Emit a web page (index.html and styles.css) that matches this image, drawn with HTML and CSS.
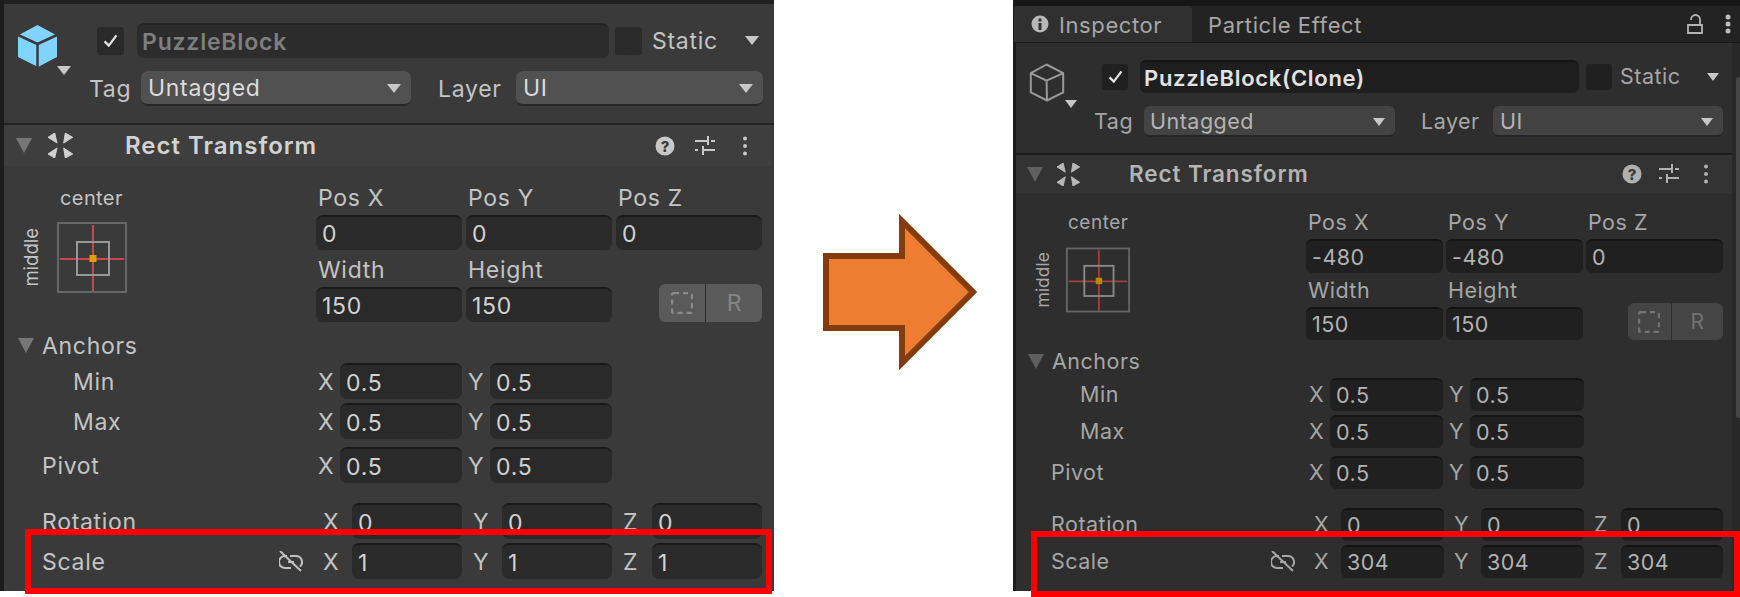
FILE: index.html
```html
<!DOCTYPE html>
<html lang="en">
<head>
<meta charset="utf-8">
<title>Inspector comparison</title>
<link rel="stylesheet" href="styles.css">
</head>
<body>
<main class="stage">

  <section class="panel panel-a">
    <div class="go-head">
      <div class="go-icon">
        <svg class="cube" viewBox="0 0 40 42"><path class="cube-fill" d="M19.5 0 39 10.500V32L20 42 0 32V10.500Z"/><path class="cube-cut" d="M0 10 19.500 19 39 10M19.500 19V42"/></svg>
        <span class="tri tri-icon"></span>
      </div>
      <div class="go-rows">
        <div class="go-row go-row-1">
          <span class="check"><svg viewBox="0 0 20 20"><path d="M3 11l5 5 9-12"/></svg></span>
          <span class="name name-off">PuzzleBlock</span>
          <span class="check"></span>
          <span class="txt static">Static</span>
          <span class="tri"></span>
        </div>
        <div class="go-row go-row-2">
          <span class="txt lbl-tag">Tag</span>
          <span class="drop drop-tag"><span>Untagged</span><span class="tri"></span></span>
          <span class="txt lbl-layer">Layer</span>
          <span class="drop drop-layer"><span>UI</span><span class="tri"></span></span>
        </div>
      </div>
    </div>
    <div class="comp-head">
      <span class="fold"></span>
      <svg class="rt-icon" viewBox="0 0 25 25"><path d="M0 4.300 6.700 0 9 10ZM15.700 10 17.300 0 24.700 4.300ZM0 21 9 15 6.700 25ZM15.700 15 24.700 21 17.300 25Z"/></svg>
      <span class="comp-title">Rect Transform</span>
      <svg class="h-icon help" viewBox="0 0 20 20"><circle cx="10" cy="10" r="9.500"/><text class="help-q" x="10" y="15.500">?</text></svg>
      <svg class="h-icon sliders" viewBox="0 0 20 20"><path d="M0 5h13M16 5h4M13 0v9M0 14h3M8 14h12M8 10v9"/></svg>
      <svg class="h-icon dots" viewBox="0 0 20 20"><circle cx="10" cy="2.500" r="2"/><circle cx="10" cy="10" r="2"/><circle cx="10" cy="17.500" r="2"/></svg>
    </div>
    <div class="body">
      <div class="rect-top">
        <div class="anchor">
          <span class="a-center">center</span>
          <span class="a-middle">middle</span>
          <svg class="a-box" viewBox="0 0 70 71">
            <rect class="ab-outer" x="1" y="1" width="68" height="69"/>
            <path class="ab-red" d="M3 37H67M36 3V69"/>
            <rect class="ab-inner" x="20" y="20" width="32" height="33"/>
            <rect class="ab-dot" x="32.500" y="33" width="7" height="7"/>
          </svg>
        </div>
        <div class="pos">
          <span class="cap">Pos X</span><span class="cap">Pos Y</span><span class="cap">Pos Z</span>
          <span class="field">0</span><span class="field">0</span><span class="field">0</span>
          <span class="cap cap-low">Width</span><span class="cap cap-low">Height</span><span></span>
          <span class="field">150</span><span class="field">150</span>
          <span class="resets">
            <span class="reset-l"><svg viewBox="0 0 22 22"><rect x="1" y="1" width="20" height="20" rx="2"/></svg></span>
            <span class="reset-r">R</span>
          </span>
        </div>
      </div>
      <div class="anchors-head"><span class="fold"></span><span class="txt">Anchors</span></div>
      <div class="vrow two gap-s"><span class="txt sub">Min</span><span class="pair"><span class="axis">X</span><span class="field">0.5</span></span><span class="pair"><span class="axis">Y</span><span class="field">0.5</span></span></div>
      <div class="vrow two gap-a"><span class="txt sub">Max</span><span class="pair"><span class="axis">X</span><span class="field">0.5</span></span><span class="pair"><span class="axis">Y</span><span class="field">0.5</span></span></div>
      <div class="vrow two gap-b"><span class="txt">Pivot</span><span class="pair"><span class="axis">X</span><span class="field">0.5</span></span><span class="pair"><span class="axis">Y</span><span class="field">0.5</span></span></div>
      <div class="vrow three gap-c"><span class="txt">Rotation</span><span class="pair"><span class="axis">X</span><span class="field">0</span></span><span class="pair"><span class="axis">Y</span><span class="field">0</span></span><span class="pair"><span class="axis">Z</span><span class="field">0</span></span></div>
      <div class="vrow three gap-a"><span class="txt scale-lbl">Scale<svg class="unlink" viewBox="0 0 24 22"><path d="M8 5H6a6 6 0 0 0 0 12h6M11 5h6a6 6 0 0 1 4 10.500M9 11h6M1 0 22 20"/></svg></span><span class="pair"><span class="axis">X</span><span class="field">1</span></span><span class="pair"><span class="axis">Y</span><span class="field">1</span></span><span class="pair"><span class="axis">Z</span><span class="field">1</span></span></div>
    </div>
    <div class="redbox"></div>
  </section>

  <div class="arrow-col">
    <svg class="arrow" viewBox="0 0 154 156"><path d="M3 42H79V7L150 78 79 149V114H3Z"/></svg>
  </div>

  <section class="panel panel-b">
    <div class="tabs">
      <span class="tab tab-on">
        <svg class="info" viewBox="0 0 18 18"><circle cx="9" cy="9" r="8.500"/><rect class="info-i" x="7.500" y="3.500" width="3" height="3"/><rect class="info-i" x="7.500" y="8" width="3" height="7"/></svg>
        <span class="tab-text">Inspector</span>
      </span>
      <span class="tab"><span class="tab-text">Particle Effect</span></span>
      <span class="tab-tools">
        <svg class="lock" viewBox="0 0 16 20"><path d="M1 11h14v8H1zM13 11V5.500a4.500 4.500 0 0 0-9 0V6"/></svg>
        <svg class="tdots" viewBox="0 0 8 20"><circle cx="4" cy="3" r="2.500"/><circle cx="4" cy="10" r="2.500"/><circle cx="4" cy="17" r="2.500"/></svg>
      </span>
    </div>
    <div class="go-head">
      <div class="go-icon">
        <svg class="cube" viewBox="0 0 40 42"><path class="cube-line" d="M19.500 1 38 10.500V32L20 41 2 32V10.500ZM2 10.500 19.500 19 38 10.500M19.500 19 20 41"/></svg>
        <span class="tri tri-icon"></span>
      </div>
      <div class="go-rows">
        <div class="go-row go-row-1">
          <span class="check"><svg viewBox="0 0 20 20"><path d="M3 11l5 5 9-12"/></svg></span>
          <span class="name">PuzzleBlock(Clone)</span>
          <span class="check"></span>
          <span class="txt static">Static</span>
          <span class="tri"></span>
        </div>
        <div class="go-row go-row-2">
          <span class="txt lbl-tag">Tag</span>
          <span class="drop drop-tag"><span>Untagged</span><span class="tri"></span></span>
          <span class="txt lbl-layer">Layer</span>
          <span class="drop drop-layer"><span>UI</span><span class="tri"></span></span>
        </div>
      </div>
    </div>
    <div class="comp-head">
      <span class="fold"></span>
      <svg class="rt-icon" viewBox="0 0 25 25"><path d="M0 4.300 6.700 0 9 10ZM15.700 10 17.300 0 24.700 4.300ZM0 21 9 15 6.700 25ZM15.700 15 24.700 21 17.300 25Z"/></svg>
      <span class="comp-title">Rect Transform</span>
      <svg class="h-icon help" viewBox="0 0 20 20"><circle cx="10" cy="10" r="9.500"/><text class="help-q" x="10" y="15.500">?</text></svg>
      <svg class="h-icon sliders" viewBox="0 0 20 20"><path d="M0 5h13M16 5h4M13 0v9M0 14h3M8 14h12M8 10v9"/></svg>
      <svg class="h-icon dots" viewBox="0 0 20 20"><circle cx="10" cy="2.500" r="2"/><circle cx="10" cy="10" r="2"/><circle cx="10" cy="17.500" r="2"/></svg>
    </div>
    <div class="body">
      <div class="rect-top">
        <div class="anchor">
          <span class="a-center">center</span>
          <span class="a-middle">middle</span>
          <svg class="a-box" viewBox="0 0 70 71">
            <rect class="ab-outer" x="1" y="1" width="68" height="69"/>
            <path class="ab-red" d="M3 37H67M36 3V69"/>
            <rect class="ab-inner" x="20" y="20" width="32" height="33"/>
            <rect class="ab-dot" x="32.500" y="33" width="7" height="7"/>
          </svg>
        </div>
        <div class="pos">
          <span class="cap">Pos X</span><span class="cap">Pos Y</span><span class="cap">Pos Z</span>
          <span class="field">-480</span><span class="field">-480</span><span class="field">0</span>
          <span class="cap cap-low">Width</span><span class="cap cap-low">Height</span><span></span>
          <span class="field">150</span><span class="field">150</span>
          <span class="resets">
            <span class="reset-l"><svg viewBox="0 0 22 22"><rect x="1" y="1" width="20" height="20" rx="2"/></svg></span>
            <span class="reset-r">R</span>
          </span>
        </div>
      </div>
      <div class="anchors-head"><span class="fold"></span><span class="txt">Anchors</span></div>
      <div class="vrow two gap-s"><span class="txt sub">Min</span><span class="pair"><span class="axis">X</span><span class="field">0.5</span></span><span class="pair"><span class="axis">Y</span><span class="field">0.5</span></span></div>
      <div class="vrow two gap-a"><span class="txt sub">Max</span><span class="pair"><span class="axis">X</span><span class="field">0.5</span></span><span class="pair"><span class="axis">Y</span><span class="field">0.5</span></span></div>
      <div class="vrow two gap-b"><span class="txt">Pivot</span><span class="pair"><span class="axis">X</span><span class="field">0.5</span></span><span class="pair"><span class="axis">Y</span><span class="field">0.5</span></span></div>
      <div class="vrow three gap-c"><span class="txt">Rotation</span><span class="pair"><span class="axis">X</span><span class="field">0</span></span><span class="pair"><span class="axis">Y</span><span class="field">0</span></span><span class="pair"><span class="axis">Z</span><span class="field">0</span></span></div>
      <div class="vrow three gap-a"><span class="txt scale-lbl">Scale<svg class="unlink" viewBox="0 0 24 22"><path d="M8 5H6a6 6 0 0 0 0 12h6M11 5h6a6 6 0 0 1 4 10.500M9 11h6M1 0 22 20"/></svg></span><span class="pair"><span class="axis">X</span><span class="field">304</span></span><span class="pair"><span class="axis">Y</span><span class="field">304</span></span><span class="pair"><span class="axis">Z</span><span class="field">304</span></span></div>
    </div>
    <div class="gutter"><span class="thumb"></span></div>
    <div class="redbox"></div>
  </section>

</main>
</body>
</html>
```
FILE: styles.css
```css
* { box-sizing: border-box; }
html, body { margin: 0; padding: 0; background: #fff; }
.stage {
  display: flex;
  width: 1740px;
  height: 597px;
  overflow: hidden;
  font-family: Inter, "Liberation Sans", sans-serif;
}

/* Each inspector keeps its own scale in custom properties */
.panel-a {
  --bg: #3a3a3a; --head: #3e3e3e; --band: #1f1f1f; --line: #222;
  --txt: #c4c4c4; --well: #2a2a2a; --well-top: #191919; --drop: #515151;
  --fs: 23px; --fs-s: 18.500px; --nudge: 2px; --ls: 0.700px;
  --h-field: 36px; --r: 7px;
  --tri-w: 14px; --tri-h: 9px;
  width: 774px;
  height: 591px;
  border-left: 4px solid #1c1c1c;
  padding-top: 4px;
}
.panel-b {
  --bg: #2e2e2e; --head: #333; --band: #232323; --line: #1a1a1a;
  --txt: #a6a6a6; --well: #202020; --well-top: #141414; --drop: #434343;
  --fs: 21.500px; --fs-s: 17.500px; --nudge: 1px; --ls: 0.500px;
  --h-field: 33px; --r: 6px;
  --tri-w: 13px; --tri-h: 8px;
  width: 727px;
  height: 591px;
  border-left: 3px solid #1c1c1c;
}
.panel {
  position: relative;
  flex: none;
  display: flex;
  flex-direction: column;
  background: var(--bg);
  color: var(--txt);
  font-size: var(--fs);
  letter-spacing: var(--ls);
  line-height: 1;
}
.panel-a { box-shadow: inset 0 4px 0 #1f1f1f; }

.txt { white-space: nowrap; padding-top: var(--nudge); }
.tri {
  flex: none;
  width: 0; height: 0;
  border-left: calc(var(--tri-w) / 2) solid transparent;
  border-right: calc(var(--tri-w) / 2) solid transparent;
  border-top: var(--tri-h) solid #c8c8c8;
}

/* Tabs (second panel only) */
.tabs {
  display: flex;
  align-items: stretch;
  flex: none;
  height: 43px;
  background: var(--band);
  border-top: 6px solid #171717;
  border-bottom: 1px solid #191919;
  font-size: 22px;
  letter-spacing: 0.600px;
}
.tab { display: flex; align-items: center; padding-left: 16px; }
.tab-text { padding-top: 2px; }
.tab-on {
  width: 178px;
  gap: 10px;
  padding-left: 17px;
  background: #303030;
  border-radius: 4px 4px 0 0;
  margin-left: -2px;
}
.tab-tools { margin-left: auto; display: flex; align-items: center; gap: 21px; padding-right: 8px; }
.info { width: 18px; height: 18px; fill: #b8b8b8; }
.info-i { fill: #303030; }
.lock { width: 16px; height: 20px; fill: none; stroke: #b4b4b4; stroke-width: 1.800; }
.tdots { width: 8px; height: 20px; fill: #bdbdbd; }

/* GameObject header */
.go-head { display: flex; border-bottom: 2px solid var(--line); flex: none; }
.panel-a .go-head { height: 121px; padding: 19px 11px 0 14px; }
.panel-b .go-head { height: 112px; padding: 17px 17px 0 13px; }
.go-icon { position: relative; flex: none; }
.panel-a .go-icon { width: 71px; padding-top: 2px; }
.panel-b .go-icon { width: 65px; padding-top: 3px; }
.cube { display: block; }
.panel-a .cube { width: 40px; height: 42px; }
.panel-b .cube { width: 36px; height: 39px; }
.cube-fill { fill: #80d4ff; }
.cube-cut { fill: none; stroke: #3a3a3a; stroke-width: 2.500; }
.cube-line { fill: none; stroke: #9a9a9a; stroke-width: 2.200; stroke-linejoin: round; }
.tri-icon { display: block; margin-top: -1px; }
.panel-a .tri-icon { margin-left: 39px; }
.panel-b .tri-icon { margin-left: 36px; margin-top: -2px; }
.go-rows { flex: 1; min-width: 0; }
.go-row { display: flex; align-items: center; }
.panel-a .go-row-1 { height: 35px; padding-left: 8px; }
.panel-b .go-row-1 { height: 33px; padding-left: 8px; }
.panel-a .go-row-2 { height: 35px; margin-top: 13px; }
.panel-b .go-row-2 { height: 31px; margin-top: 13px; }
.check {
  flex: none;
  display: flex; align-items: center; justify-content: center;
  background: var(--well);
  border-radius: 3px;
}
.panel-a .check { width: 27px; height: 28px; }
.panel-b .check { width: 26px; height: 26px; }
.check svg { width: 17px; height: 17px; fill: none; stroke: #e4e4e4; stroke-width: 2.600; }
.name {
  flex: none;
  display: flex; align-items: center;
  background: #1e1e1e;
  color: #e2e2e2;
  font-weight: 600;
  border-radius: var(--r);
  border-top: 2px solid #141414;
}
.panel-a .name { width: 472px; height: 35px; margin: 0 6px 0 13px; padding: 2px 0 0 5px; font-size: 23px; letter-spacing: 0.800px; }
.panel-b .name { width: 439px; height: 33px; margin: 0 7px 0 12px; padding: 1px 0 0 4px; font-size: 22px; letter-spacing: 0.700px; }
.name-off { background: #2c2c2c; color: #7e7e7e; border-top-color: #252525; }
.panel-a .static { margin: 0 auto 0 10px; }
.panel-b .static { margin: 0 auto 0 8px; }
.go-row-1 .tri { margin-right: 4px; }
.drop {
  flex: none;
  display: flex; align-items: center; justify-content: space-between;
  height: 100%;
  background: var(--drop);
  color: #dcdcdc;
  border-radius: var(--r);
  border-bottom: 2px solid #262626;
  padding-top: 2px;
}
.panel-b .drop { color: #b4b4b4; }
.panel-a .lbl-tag { width: 52px; }
.panel-b .lbl-tag { width: 50px; }
.panel-a .drop-tag { width: 270px; padding-right: 10px; padding-left: 7px; }
.panel-b .drop-tag { width: 251px; padding-right: 10px; padding-left: 6px; }
.panel-a .lbl-layer { margin-left: 27px; width: 78px; }
.panel-b .lbl-layer { margin-left: 26px; width: 72px; }
.panel-a .drop-layer { width: 247px; padding-right: 10px; padding-left: 7px; }
.panel-b .drop-layer { width: 230px; padding-right: 10px; padding-left: 7px; }

/* Component header */
.comp-head { display: flex; align-items: center; flex: none; background: var(--head); }
.panel-a .comp-head { height: 41px; padding-left: 12px; margin-right: 2px; }
.panel-b .comp-head { height: 38px; padding-left: 11px; }
.fold {
  flex: none;
  width: 0; height: 0;
  border-left: 8px solid transparent;
  border-right: 8px solid transparent;
  border-top: 15px solid #777;
}
.panel-b .fold { border-top-color: #5f5f5f; }
.rt-icon { flex: none; fill: #d0d0d0; stroke: #d0d0d0; stroke-width: 1; stroke-linejoin: round; }
.panel-a .rt-icon { width: 25px; height: 25px; margin-left: 16px; }
.panel-b .rt-icon { width: 23px; height: 23px; margin-left: 14px; fill: #b8b8b8; stroke: #b8b8b8; }
.comp-title { font-weight: 600; color: #d2d2d2; white-space: nowrap; }
.panel-a .comp-title { margin-left: 52px; font-size: 24px; letter-spacing: 1px; }
.panel-b .comp-title { margin-left: 49px; font-size: 22.500px; letter-spacing: 0.900px; color: #b4b4b4; }
.h-icon { flex: none; width: 20px; height: 20px; }
.help { fill: #c8c8c8; margin-left: auto; }
.panel-b .help { fill: #b0b0b0; }
.help-q { fill: #3a3a3a; font-size: 15px; font-weight: 800; text-anchor: middle; font-family: Inter, sans-serif; letter-spacing: 0; }
.sliders { fill: none; stroke: #c8c8c8; stroke-width: 2; margin-left: 20px; }
.panel-b .sliders { stroke: #b0b0b0; margin-left: 17px; }
.dots { fill: #c8c8c8; margin-left: 20px; }
.panel-b .dots { fill: #b0b0b0; margin-left: 17px; }
.panel-a .dots { margin-right: 17px; }
.panel-b .dots { margin-right: 24px; }

/* Transform body */
.rect-top { display: flex; flex: none; }
.panel-a .rect-top { padding-top: 16px; }
.panel-b .rect-top { padding-top: 14px; }
.anchor { display: grid; flex: none; justify-items: start; align-items: start; align-content: start; }
.panel-a .anchor { width: 312px; padding-left: 18px; grid-template-columns: 35px 1fr; grid-template-rows: 40px auto; }
.panel-b .anchor { width: 290px; padding-left: 18px; grid-template-columns: 32px 1fr; grid-template-rows: 40px auto; }
.a-center { grid-column: 2; grid-row: 1; font-size: var(--fs-s); padding-top: 6px; }
.panel-a .a-center { margin-left: 3px; font-size: 20px; letter-spacing: 0.400px; }
.panel-b .a-center { margin-left: 2px; font-size: 19px; letter-spacing: 0.500px; }
.a-middle {
  grid-column: 1; grid-row: 2;
  writing-mode: vertical-rl;
  transform: rotate(180deg);
  font-size: var(--fs-s);
  letter-spacing: 0;
  justify-self: start;
  align-self: center;
}
.a-box { grid-column: 2; grid-row: 2; display: block; }
.panel-a .a-box { width: 70px; height: 71px; }
.panel-b .a-box { width: 64px; height: 66px; }
.ab-outer { fill: none; stroke: #666; stroke-width: 2; }
.ab-red { fill: none; stroke: #c8484c; stroke-width: 2; }
.ab-inner { fill: none; stroke: #989898; stroke-width: 2; }
.ab-dot { fill: #e0a000; }
.panel-b .ab-red { stroke: #a83c3c; }
.panel-b .ab-inner { stroke: #8a8a8a; }
.panel-b .ab-dot { fill: #b88a00; }

.pos { display: grid; flex: none; }
.panel-a .pos { grid-template-columns: repeat(3, 146px); column-gap: 4px; grid-template-rows: 33px 35px 37px 35px; }
.panel-b .pos { grid-template-columns: repeat(3, 137px); column-gap: 3px; grid-template-rows: 32px 34px 34px 33px; }
.cap { display: flex; align-items: center; padding-left: 2px; white-space: nowrap; }
.panel-b .cap { padding-bottom: 1px; }
.panel-a .cap-low { padding-top: 4px; }
.panel-b .cap-low { padding: 1px 0 0 2px; }
.field {
  display: flex; align-items: center;
  min-width: 0;
  background: var(--well);
  color: #d2d2d2;
  border-radius: var(--r);
  border-top: 2px solid var(--well-top);
  padding: var(--nudge) 0 0 6px;
  white-space: nowrap;
}
.panel-b .field { color: #b2b2b2; }
.resets { display: flex; justify-self: end; align-self: end; font-size: 23px; letter-spacing: 0; }
.panel-a .resets { width: 103px; height: 38px; }
.panel-b .resets { width: 95px; height: 37px; font-size: 21px; }
.reset-l, .reset-r { display: flex; align-items: center; justify-content: center; background: #5a5a5a; color: #858585; }
.panel-b .reset-l, .panel-b .reset-r { background: #454545; color: #737373; }
.reset-l { width: 46%; border-radius: 6px 0 0 6px; border-right: 1px solid #2e2e2e; }
.reset-r { flex: 1; border-radius: 0 6px 6px 0; }
.reset-l svg { width: 22px; height: 22px; fill: none; stroke: #8a8a8a; stroke-width: 2.400; stroke-dasharray: 5 4; }
.panel-b .reset-l svg { stroke: #737373; }

.anchors-head { display: flex; align-items: center; flex: none; }
.panel-a .anchors-head { height: 36px; margin-top: 5px; padding-left: 14px; gap: 8px; }
.panel-b .anchors-head { height: 34px; margin-top: 4px; padding-left: 12px; gap: 8px; }

.vrow { display: grid; align-items: stretch; flex: none; height: var(--h-field); }
.vrow > .txt { align-self: center; }
.panel-a .vrow { padding-left: 38px; }
.panel-b .vrow { padding-left: 35px; }
.panel-a .vrow.two { grid-template-columns: 270px 144px 144px; column-gap: 6px; }
.panel-b .vrow.two { grid-template-columns: 252px 134px 135px; column-gap: 6px; }
.panel-a .vrow.three { grid-template-columns: 270px 139px 139px 139px; column-gap: 11px; }
.panel-b .vrow.three { grid-template-columns: 253px 130px 130px 129px; column-gap: 10px; }
.gap-a { margin-top: 4px; }
.gap-b { margin-top: 8px; }
.panel-a .gap-c { margin-top: 20px; }
.panel-b .gap-c { margin-top: 19px; }
.panel-a .sub { margin-left: 31px; }
.panel-b .sub { margin-left: 29px; }
.pair { display: flex; align-items: stretch; min-width: 0; }
.axis { flex: none; display: flex; align-items: center; padding-top: var(--nudge); }
.panel-a .two .axis { width: 22px; }
.panel-b .two .axis { width: 21px; }
.panel-a .three .axis { width: 29px; }
.panel-b .three .axis { width: 27px; }
.pair .field { flex: 1; }
.scale-lbl { display: flex; align-items: center; justify-content: space-between; }
.panel-a .scale-lbl { padding-right: 9px; }
.panel-b .scale-lbl { padding-right: 9px; }
.unlink { flex: none; width: 24px; height: 22px; fill: none; stroke: #c0c0c0; stroke-width: 2; }
.panel-b .unlink { stroke: #a6a6a6; }

/* Scrollbar gutter, laid over the right edge of the second panel */
.gutter { position: absolute; top: 43px; right: 0; bottom: 0; width: 8px; background: #282828; }
.thumb { position: absolute; top: 34px; right: 0; width: 4px; height: 341px; background: #454545; border-radius: 3px 0 0 3px; }

/* Red highlight laid over the Scale row */
.redbox { position: absolute; border: 6px solid #ff0000; pointer-events: none; }
.panel-a .redbox { left: 21px; top: 529px; width: 747px; height: 65px; }
.panel-b .redbox { left: 15px; top: 531px; width: 709px; height: 66px; }

/* Arrow between the panels */
.arrow-col { flex: none; width: 239px; padding: 214px 0 0 49px; }
.arrow { display: block; width: 154px; height: 156px; fill: #ed7d31; stroke: #843c0c; stroke-width: 6; }
```
